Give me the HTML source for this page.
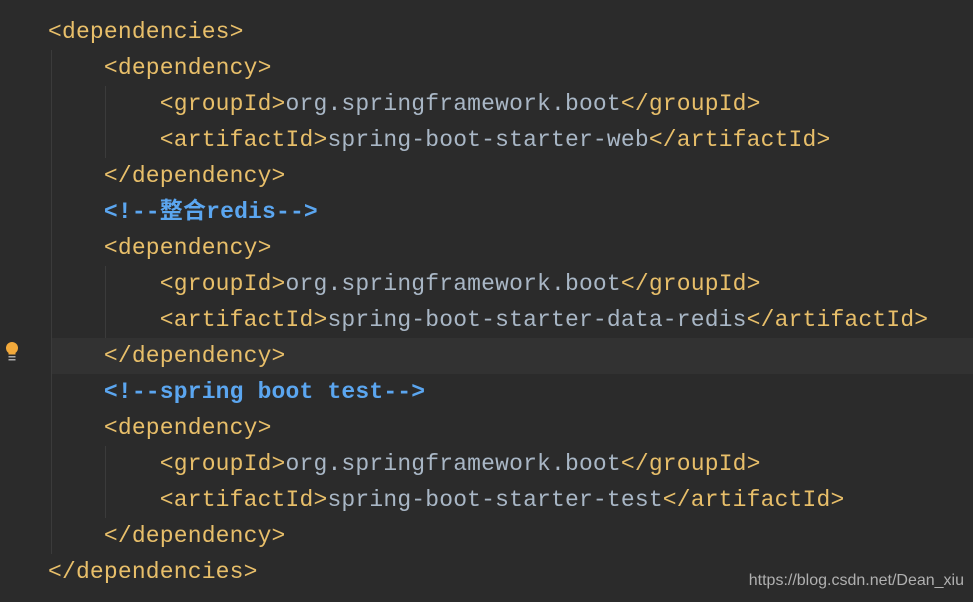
<!DOCTYPE html>
<html><head><meta charset="utf-8"><style>
html,body{margin:0;padding:0}
body{width:973px;height:602px;background:#2b2b2b;position:relative;overflow:hidden;font-family:"Liberation Mono","Noto Sans CJK SC",monospace;font-size:23px;letter-spacing:0.17px}
.l{position:absolute;height:36px;line-height:36px;white-space:pre;color:#a9b7c6;left:48px}
.t{color:#e8bf6a}
.c{color:#5ba6f0;font-weight:bold}
.hl{position:absolute;left:52px;right:0;top:338px;height:36px;background:#323232}
.g{position:absolute;width:1px;background:#3b3b3b}
.wm{position:absolute;right:9px;top:572px;font-family:"Liberation Sans",sans-serif;font-size:16px;letter-spacing:0;color:#b0b0b0}
</style></head><body>
<div class="hl"></div>
<div class="g" style="left:51px;top:50px;height:504px"></div>
<div class="g" style="left:105px;top:86px;height:72px"></div>
<div class="g" style="left:105px;top:266px;height:72px"></div>
<div class="g" style="left:105px;top:446px;height:72px"></div>
<svg style="position:absolute;left:3px;top:341px" width="18" height="24" viewBox="0 0 18 24"><circle cx="9" cy="7" r="6" fill="#f2a93b"/><rect x="5.5" y="9" width="7" height="4.5" fill="#f2a93b"/><rect x="5.5" y="15" width="7" height="1.5" fill="#aaa"/><rect x="5.5" y="18" width="7" height="1.5" fill="#aaa"/></svg>
<div class="l" style="top:14px"><span class="t">&lt;dependencies&gt;</span></div>
<div class="l" style="top:50px">    <span class="t">&lt;dependency&gt;</span></div>
<div class="l" style="top:86px">        <span class="t">&lt;groupId&gt;</span>org.springframework.boot<span class="t">&lt;/groupId&gt;</span></div>
<div class="l" style="top:122px">        <span class="t">&lt;artifactId&gt;</span>spring-boot-starter-web<span class="t">&lt;/artifactId&gt;</span></div>
<div class="l" style="top:158px">    <span class="t">&lt;/dependency&gt;</span></div>
<div class="l" style="top:194px">    <span class="c">&lt;!--整合redis--&gt;</span></div>
<div class="l" style="top:230px">    <span class="t">&lt;dependency&gt;</span></div>
<div class="l" style="top:266px">        <span class="t">&lt;groupId&gt;</span>org.springframework.boot<span class="t">&lt;/groupId&gt;</span></div>
<div class="l" style="top:302px">        <span class="t">&lt;artifactId&gt;</span>spring-boot-starter-data-redis<span class="t">&lt;/artifactId&gt;</span></div>
<div class="l" style="top:338px">    <span class="t">&lt;/dependency&gt;</span></div>
<div class="l" style="top:374px">    <span class="c">&lt;!--spring boot test--&gt;</span></div>
<div class="l" style="top:410px">    <span class="t">&lt;dependency&gt;</span></div>
<div class="l" style="top:446px">        <span class="t">&lt;groupId&gt;</span>org.springframework.boot<span class="t">&lt;/groupId&gt;</span></div>
<div class="l" style="top:482px">        <span class="t">&lt;artifactId&gt;</span>spring-boot-starter-test<span class="t">&lt;/artifactId&gt;</span></div>
<div class="l" style="top:518px">    <span class="t">&lt;/dependency&gt;</span></div>
<div class="l" style="top:554px"><span class="t">&lt;/dependencies&gt;</span></div>
<div class="wm">https://blog.csdn.net/Dean_xiu</div>
</body></html>
